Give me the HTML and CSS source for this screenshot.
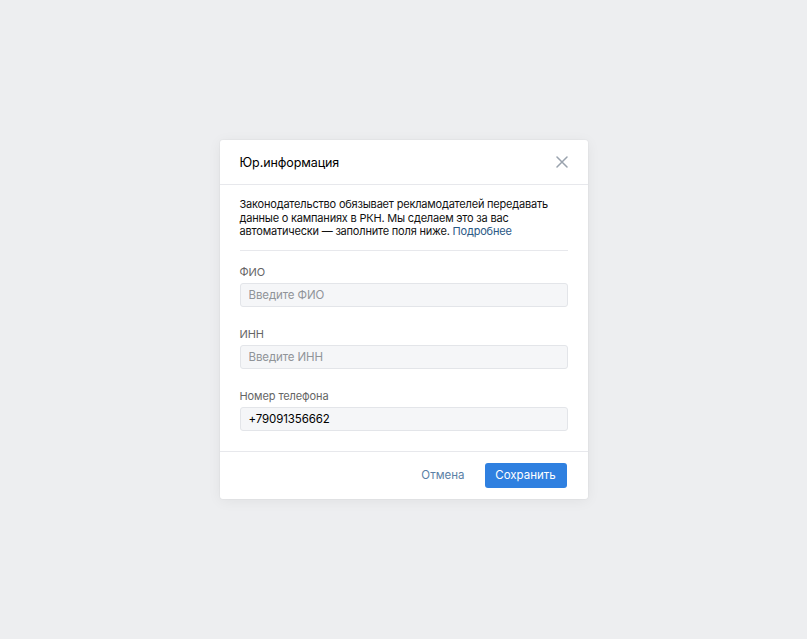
FILE: index.html
```html
<!DOCTYPE html>
<html lang="ru">
<head>
    <meta charset="UTF-8">
    <meta name="viewport" content="width=device-width, initial-scale=1.0">
    <title>Юр.информация</title>
    <link rel="stylesheet" href="styles.css">
</head>
<body>
    <div class="dialog">
        <div class="dialog-header">
            <span class="dialog-title">Юр.информация</span>
            <button class="close" type="button" aria-label="Закрыть">
                <svg width="12" height="12" viewBox="0 0 12 12"><path d="M1 1L11 11M11 1L1 11" stroke="#99a2ad" stroke-width="1.5" stroke-linecap="round"/></svg>
            </button>
        </div>

        <div class="dialog-body">
            <p class="intro"><span>Законодательство обязывает рекламодателей передавать данные о кампаниях в РКН. Мы сделаем это за вас</span> <span>автоматически — заполните поля ниже.</span> <a href="#">Подробнее</a></p>

            <div class="field">
                <label for="fio">ФИО</label>
                <input type="text" id="fio" placeholder="Введите ФИО">
            </div>
            <div class="field">
                <label for="inn">ИНН</label>
                <input type="text" id="inn" placeholder="Введите ИНН">
            </div>
            <div class="field">
                <label for="phone">Номер телефона</label>
                <input type="text" id="phone" value="+79091356662">
            </div>
        </div>

        <div class="dialog-footer">
            <button class="btn-cancel" type="button">Отмена</button>
            <button class="btn-save" type="button">Сохранить</button>
        </div>
    </div>
</body>
</html>
```

FILE: styles.css
```css
html, body { margin: 0; padding: 0; }
body { background: #edeef0; font-family: "Inter", "Noto Sans", sans-serif; color: #000; min-height: 100vh; display: flex; align-items: center; justify-content: center; }
.dialog { width: 368px; background: #fff; border-radius: 3px; box-shadow: 0 2px 14px rgba(0, 0, 0, 0.06), 0 0 0 1px rgba(0, 0, 0, 0.02); }
.dialog-header { height: 44px; display: flex; align-items: center; justify-content: space-between; padding: 0 20px; border-bottom: 1px solid #e7e8ec; }
.dialog-title { font-size: 12.5px; color: #000; letter-spacing: -0.1px; }
.close { border: none; background: none; padding: 0; display: flex; cursor: pointer; }
.dialog-body { padding: 13px 20px 20px; }
.intro { margin: 0; font-size: 11px; line-height: 13.5px; letter-spacing: -0.2px; color: #111; padding-bottom: 11px; border-bottom: 1px solid #e7e8ec; }
.intro a { color: #2a5885; text-decoration: none; }
.field { margin-top: 14px; }
.field + .field { margin-top: 20px; }
label { display: block; font-size: 11px; line-height: 14px; letter-spacing: -0.1px; color: #656565; margin-bottom: 4px; }
input { display: block; box-sizing: border-box; width: 100%; height: 24px; padding: 0 8px; border: 1px solid #e3e5e9; border-radius: 3px; background: #f5f6f8; font-family: inherit; font-size: 11.5px; letter-spacing: -0.1px; color: #000; outline: none; }
input::placeholder { color: #909499; }
.dialog-footer { height: 48px; box-sizing: border-box; border-top: 1px solid #e7e8ec; display: flex; align-items: center; justify-content: flex-end; padding: 0 21px; gap: 10px; }
.btn-cancel { border: none; background: none; font-family: inherit; font-size: 11.5px; color: #5b7fa6; padding: 0 10px; height: 25px; cursor: pointer; }
.btn-save { border: none; background: #2f80e0; color: #fff; font-family: inherit; font-size: 11.5px; height: 25px; width: 82px; border-radius: 3px; cursor: pointer; }
```
